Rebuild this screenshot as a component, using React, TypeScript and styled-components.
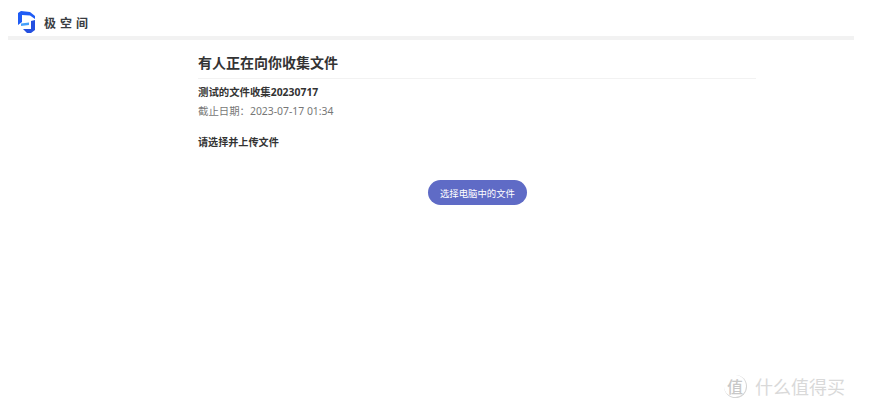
import { createGlobalStyle, styled } from "styled-components";

const GlobalStyle = createGlobalStyle`
    html, body {
        margin: 0;
        padding: 0;
        background: #ffffff;
    }
    body {
        font-family: "Noto Sans", "Noto Sans CJK SC", sans-serif;
    }
`;

const Page = styled.div`
    position: relative;
    width: 871px;
    height: 413px;
    overflow: hidden;
    background: #ffffff;
`;

const Header = styled.header`
    display: flex;
    align-items: center;
    gap: 9px;
    height: 36px;
    padding: 8px 0 0 18px;
    box-sizing: border-box;
`;

const BrandName = styled.span`
    font-family: "Noto Sans CJK SC", sans-serif;
    font-size: 12px;
    font-weight: 700;
    letter-spacing: 4px;
    color: #3a3d42;
`;

const HeaderBar = styled.div`
    height: 4px;
    margin: 0 17px 0 8px;
    background: #f2f2f2;
`;

const Main = styled.main`
    display: flex;
    flex-direction: column;
    width: 558px;
    margin-left: 198px;
`;

const Title = styled.h1`
    margin: 0;
    padding: 12px 0 6px;
    font-family: "Noto Sans CJK SC", sans-serif;
    font-size: 14px;
    line-height: 20px;
    font-weight: 700;
    color: #333333;
    border-bottom: 1px solid #f2f2f2;
`;

const TaskName = styled.div`
    margin-top: 5px;
    font-family: "Noto Sans", "Noto Sans CJK SC", sans-serif;
    font-size: 10.4px;
    line-height: 16px;
    font-weight: 700;
    color: #333333;
`;

const Deadline = styled.div`
    margin-top: 3px;
    font-family: "Noto Sans", "Noto Sans CJK SC", sans-serif;
    font-size: 10.4px;
    line-height: 16px;
    color: #777777;
`;

const SectionLabel = styled.div`
    margin-top: 15px;
    font-family: "Noto Sans CJK SC", sans-serif;
    font-size: 10.1px;
    line-height: 16px;
    font-weight: 700;
    color: #333333;
`;

const ButtonRow = styled.div`
    display: flex;
    margin-top: 30px;
    padding-left: 230px;
`;

const UploadButton = styled.button`
    width: 99px;
    height: 25px;
    padding: 0;
    border: none;
    border-radius: 13px;
    background: #5f6bc6;
    color: #ffffff;
    font-family: "Noto Sans CJK SC", sans-serif;
    font-size: 9.4px;
    cursor: pointer;
`;

const Watermark = styled.div`
    position: absolute;
    left: 724px;
    top: 374px;
    display: flex;
    align-items: center;
    gap: 8px;
    color: #d9d9d9;
    font-family: "Noto Sans CJK SC", sans-serif;
    font-size: 18px;
    line-height: 24px;
`;

const WatermarkBadge = styled.span`
    display: flex;
    align-items: center;
    justify-content: center;
    width: 22px;
    height: 22px;
    border-radius: 50%;
    border-right: 1px solid #d4d4d4;
    border-bottom: 1px solid #d4d4d4;
    color: #c8c8c8;
    font-size: 16px;
    font-weight: 500;
`;

const Logo = () => (
    <svg width="17" height="22" viewBox="0 0 17 22" fill="none">
        <path d="M0 2 L3 0 L12 1 L17 5 L17 8 L12 4.5 L4 4 L4 11 L0 14 Z" fill="#1f5cf5" />
        <path d="M3 12.5 L11 11.5 L11 14 L3 15 Z" fill="#45a0fa" />
        <path d="M17 9 L17 19 L13 22 L9 22 L5 18 L13 18 L13 10 Z" fill="#2450e0" />
    </svg>
);

export default function App() {
    return (
        <Page>
            <GlobalStyle />
            <Header>
                <Logo />
                <BrandName>极空间</BrandName>
            </Header>
            <HeaderBar />
            <Main>
                <Title>有人正在向你收集文件</Title>
                <TaskName>测试的文件收集20230717</TaskName>
                <Deadline>{"截止日期\uFF1A2023-07-17 01:34"}</Deadline>
                <SectionLabel>请选择并上传文件</SectionLabel>
                <ButtonRow>
                    <UploadButton>选择电脑中的文件</UploadButton>
                </ButtonRow>
            </Main>
            <Watermark>
                <WatermarkBadge>值</WatermarkBadge>
                什么值得买
            </Watermark>
        </Page>
    );
}
